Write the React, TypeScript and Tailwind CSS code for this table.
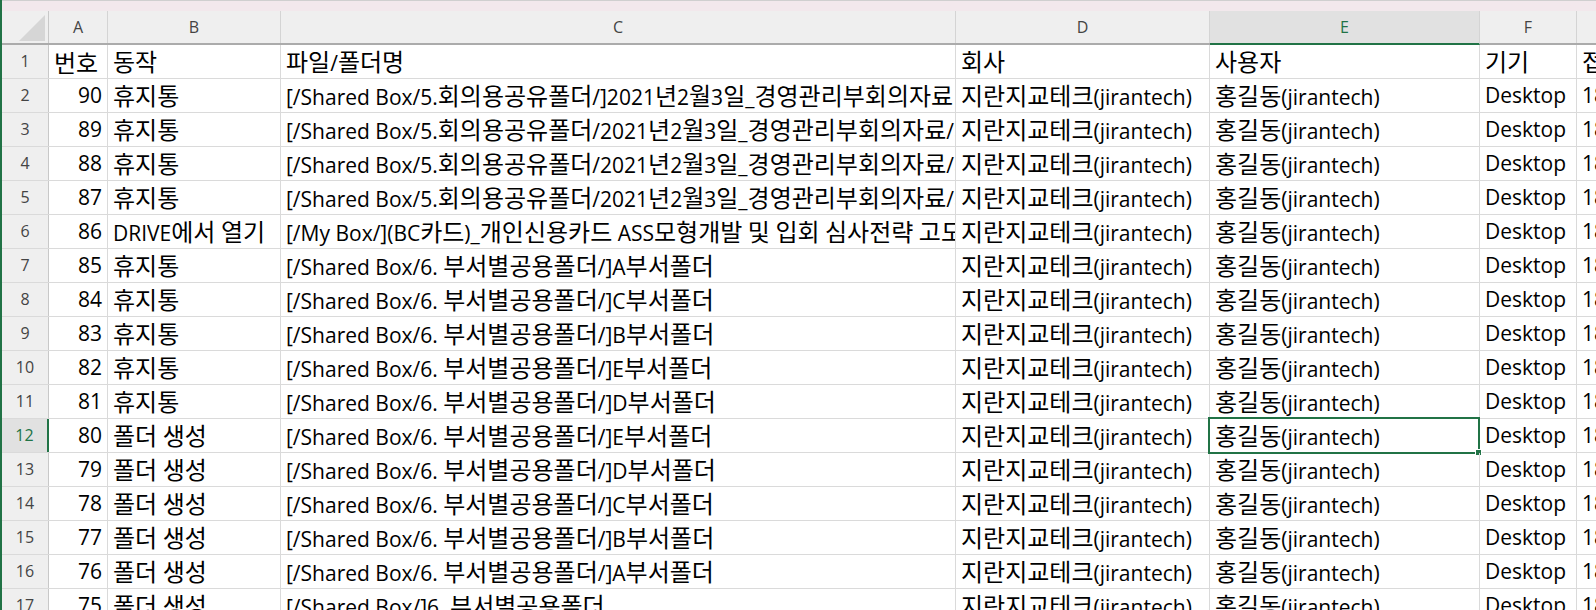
import React from "react";

type Row = { n: number; no: string; act: string; path: string; co: string; user: string; dev: string; g: string };

const long5 = "[/Shared Box/5.회의용공유폴더/2021년2월3일_경영관리부회의자료/회의록_최종.docx";
const CO = "지란지교테크(jirantech)";
const US = "홍길동(jirantech)";
const rows: Row[] = [
  { n: 1, no: "번호", act: "동작", path: "파일/폴더명", co: "회사", user: "사용자", dev: "기기", g: "접속" },
  { n: 2, no: "90", act: "휴지통", path: "[/Shared Box/5.회의용공유폴더/]2021년2월3일_경영관리부회의자료", co: CO, user: US, dev: "Desktop", g: "183" },
  { n: 3, no: "89", act: "휴지통", path: long5, co: CO, user: US, dev: "Desktop", g: "183" },
  { n: 4, no: "88", act: "휴지통", path: long5, co: CO, user: US, dev: "Desktop", g: "183" },
  { n: 5, no: "87", act: "휴지통", path: long5, co: CO, user: US, dev: "Desktop", g: "183" },
  { n: 6, no: "86", act: "DRIVE에서 열기", path: "[/My Box/](BC카드)_개인신용카드 ASS모형개발 및 입회 심사전략 고도화.pptx", co: CO, user: US, dev: "Desktop", g: "183" },
  { n: 7, no: "85", act: "휴지통", path: "[/Shared Box/6. 부서별공용폴더/]A부서폴더", co: CO, user: US, dev: "Desktop", g: "183" },
  { n: 8, no: "84", act: "휴지통", path: "[/Shared Box/6. 부서별공용폴더/]C부서폴더", co: CO, user: US, dev: "Desktop", g: "183" },
  { n: 9, no: "83", act: "휴지통", path: "[/Shared Box/6. 부서별공용폴더/]B부서폴더", co: CO, user: US, dev: "Desktop", g: "183" },
  { n: 10, no: "82", act: "휴지통", path: "[/Shared Box/6. 부서별공용폴더/]E부서폴더", co: CO, user: US, dev: "Desktop", g: "183" },
  { n: 11, no: "81", act: "휴지통", path: "[/Shared Box/6. 부서별공용폴더/]D부서폴더", co: CO, user: US, dev: "Desktop", g: "183" },
  { n: 12, no: "80", act: "폴더 생성", path: "[/Shared Box/6. 부서별공용폴더/]E부서폴더", co: CO, user: US, dev: "Desktop", g: "183" },
  { n: 13, no: "79", act: "폴더 생성", path: "[/Shared Box/6. 부서별공용폴더/]D부서폴더", co: CO, user: US, dev: "Desktop", g: "183" },
  { n: 14, no: "78", act: "폴더 생성", path: "[/Shared Box/6. 부서별공용폴더/]C부서폴더", co: CO, user: US, dev: "Desktop", g: "183" },
  { n: 15, no: "77", act: "폴더 생성", path: "[/Shared Box/6. 부서별공용폴더/]B부서폴더", co: CO, user: US, dev: "Desktop", g: "183" },
  { n: 16, no: "76", act: "폴더 생성", path: "[/Shared Box/6. 부서별공용폴더/]A부서폴더", co: CO, user: US, dev: "Desktop", g: "183" },
  { n: 17, no: "75", act: "폴더 생성", path: "[/Shared Box/]6. 부서별공용폴더", co: CO, user: US, dev: "Desktop", g: "183" },
];

const cols = [
  { k: "A", w: "w-[59px]" },
  { k: "B", w: "w-[173px]" },
  { k: "C", w: "w-[675px]" },
  { k: "D", w: "w-[254px]" },
  { k: "E", w: "w-[270px]" },
  { k: "F", w: "w-[97px]" },
];

// Hangul runs get the Korean face at its own size; the rest uses the Latin face.
function Mix({ text }: { text: string }) {
  const parts = text.split(/([\uAC00-\uD7A3\u3131-\u318E]+)/);
  return (
    <>
      {parts.map((p, i) =>
        i % 2 === 1 ? (
          <span key={i} className="text-[24px] font-['Noto_Sans_CJK_KR',sans-serif]">
            {p}
          </span>
        ) : (
          <React.Fragment key={i}>{p}</React.Fragment>
        )
      )}
    </>
  );
}

const cell = "h-full shrink-0 border-r border-[#dadada] overflow-hidden whitespace-nowrap flex items-center px-[5px]";

export default function App() {
  return (
    <div className="w-[1596px] h-[610px] overflow-hidden bg-white border-l-2 border-[#217346] flex flex-col font-['Open_Sans','Noto_Sans_CJK_KR',sans-serif] text-black">
      {/* top strip */}
      <div className="h-[11px] shrink-0 bg-[#f2e8ec] border-t border-[#cfcfcf]" />
      {/* column headers */}
      <div className="h-[34px] shrink-0 flex bg-[#efefef] border-b-2 border-[#ababab] text-[16px] text-[#444]">
        <div className="w-[47px] shrink-0 h-full border-r border-[#c8c8c8] flex items-end justify-end pr-[3px] pb-[2px]">
          <svg width="26" height="26" viewBox="0 0 26 26">
            <polygon points="26,0 26,26 0,26" fill="#d6d6d6" />
          </svg>
        </div>
        {cols.map((c) =>
          c.k === "E" ? (
            <div key={c.k} className={`${c.w} shrink-0 h-[34px] -mb-[2px] bg-[#e1e1e1] border-r border-[#d4d4d4] border-b-2 border-b-[#217346] flex items-center justify-center text-[#217346]`}>
              {c.k}
            </div>
          ) : (
            <div key={c.k} className={`${c.w} shrink-0 h-full border-r border-[#d4d4d4] flex items-center justify-center`}>
              {c.k}
            </div>
          )
        )}
        <div className="flex-1 h-full" />
      </div>
      {/* body rows */}
      <div className="flex-1 flex flex-col text-[21px] leading-[33px]">
        {rows.map((r) => {
          const sel = r.n === 12;
          return (
            <div key={r.n} className="h-[34px] shrink-0 flex border-b border-[#dadada]">
              <div
                className={
                  sel
                    ? "w-[47px] shrink-0 h-full bg-[#e1e1e1] border-r-2 border-[#217346] flex items-center justify-center text-[16px] text-[#217346]"
                    : "w-[47px] shrink-0 h-full bg-[#efefef] border-r border-[#c8c8c8] flex items-center justify-center text-[16px] text-[#444]"
                }
              >
                {r.n}
              </div>
              <div className={`${cell} w-[59px] ${r.n === 1 ? "justify-start" : "justify-end"}`}>
                <Mix text={r.no} />
              </div>
              <div className={`${cell} w-[173px]`}>
                <span><Mix text={r.act} /></span>
              </div>
              <div className={`${cell} w-[675px]`}>
                <span><Mix text={r.path} /></span>
              </div>
              <div className={`${cell} w-[254px]`}>
                <span><Mix text={r.co} /></span>
              </div>
              <div className="relative w-[270px] h-full shrink-0 border-r border-[#dadada]">
                <div className="h-full overflow-hidden whitespace-nowrap flex items-center px-[5px]">
                  <span><Mix text={r.user} /></span>
                </div>
                {sel && (
                  <>
                    <div className="absolute left-[-2px] top-[-2px] right-[-1px] bottom-[-2px] border-2 border-[#217346] pointer-events-none" />
                    <div className="absolute right-[-3px] bottom-[-4px] w-[7px] h-[7px] bg-[#217346] border border-white" />
                  </>
                )}
              </div>
              <div className={`${cell} w-[97px]`}>
                <span><Mix text={r.dev} /></span>
              </div>
              <div className="flex-1 h-full overflow-hidden whitespace-nowrap flex items-center px-[5px]">
                <span><Mix text={r.g} /></span>
              </div>
            </div>
          );
        })}
      </div>
    </div>
  );
}
